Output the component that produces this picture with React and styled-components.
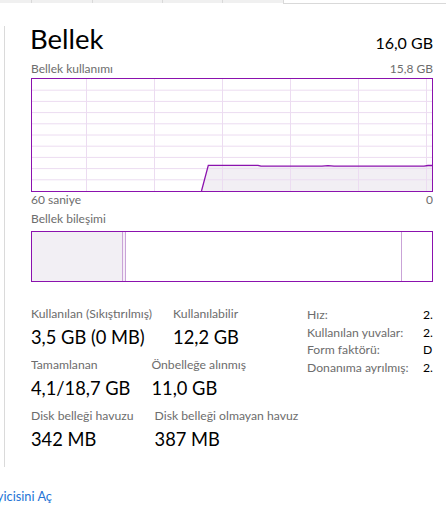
import styled, { createGlobalStyle } from "styled-components"

const GlobalStyle = createGlobalStyle`
html, body {
  margin: 0;
  padding: 0;
  background: #ffffff;
}
body {
  font-family: "Lato", "Noto Sans", sans-serif;
  color: #000000;
}
`

const Page = styled.div`
width: 446px;
height: 509px;
display: flex;
flex-direction: column;
overflow: hidden;
`

const TabStrip = styled.div`
display: flex;
height: 4px;
flex-shrink: 0;
`
const Tab = styled.div`
width: ${(p) => p.w}px;
height: 3px;
background: #f0f0f0;
border-left: ${(p) => (p.first ? "none" : "1px solid #d9d9d9")};
box-sizing: border-box;
`
const TabRest = styled.div`
flex: 1;
height: 3px;
border-left: 1px solid #d9d9d9;
border-bottom: 1px solid #d9d9d9;
`

const Main = styled.div`
display: flex;
height: 463px;
flex-shrink: 0;
`
const Divider = styled.div`
width: 1px;
margin: 22px 0 0 4px;
background: #dadada;
`
const Panel = styled.div`
width: 402px;
margin-left: 26px;
padding-top: 18px;
overflow: hidden;
`

const Header = styled.div`
display: flex;
justify-content: space-between;
align-items: baseline;
height: 34px;
`
const Title = styled.h1`
margin: 0 0 0 -1px;
font-size: 27.5px;
font-weight: 400;
line-height: 34px;
`
const Total = styled.span`
font-size: 16px;
line-height: 20px;
`

const Caption = styled.div`
display: flex;
justify-content: space-between;
font-size: 12px;
line-height: 16px;
color: #6d6d6d;
margin-top: ${(p) => p.mt || 0}px;
`

const Chart = styled.div`
margin-top: 1px;
height: 112px;
border: 1px solid #8b12ae;
`

const Composition = styled.div`
margin-top: 4px;
height: 49px;
display: flex;
border: 1px solid #8b12ae;
`
const Segment = styled.div`
width: ${(p) => (p.w ? `${p.w}px` : "auto")};
flex: ${(p) => (p.w ? "none" : "1")};
background: ${(p) => p.bg || "#ffffff"};
border-right: ${(p) => (p.last ? "none" : "1px solid #c9a3d7")};
`

const Stats = styled.div`
margin-top: 24px;
display: flex;
align-items: flex-start;
`
const StatsLeft = styled.div`
width: 276px;
display: flex;
flex-direction: column;
gap: 8px;
`
const StatRow = styled.div`
display: flex;
gap: 21px;
`
const Stat = styled.div`
display: flex;
flex-direction: column;
gap: 3px;
white-space: nowrap;
`
const StatLabel = styled.span`
font-size: 12.2px;
line-height: 16px;
color: #6d6d6d;
`
const StatValue = styled.span`
font-size: 18.3px;
line-height: 24px;
`

const Specs = styled.div`
display: grid;
grid-template-columns: 116px auto;
font-size: 12.2px;
line-height: 17.7px;
white-space: nowrap;
`
const SpecLabel = styled.span`
color: #6d6d6d;
`
const SpecValue = styled.span`
color: #000000;
`

const Footer = styled.div`
margin-top: 21px;
width: 52px;
display: flex;
justify-content: flex-end;
overflow: hidden;
white-space: nowrap;
`
const Link = styled.a`
font-size: 12.8px;
line-height: 16px;
color: #2474d6;
cursor: pointer;
`

const vLines = [54, 122, 190, 258, 326, 394]
const hLines = [1, 2, 3, 4, 5, 6, 7, 8, 9].map((i) => i * 11.2)
const usage = "169.5,112 176.3,86.3 226,86.3 229,87.2 290,87.2 296,86.6 302,87.2 392,87.2 396,86.5 400,86.5"

const UsageChart = () => (
  <svg width="400" height="112" style={{ display: "block" }}>
    <polygon points={`${usage} 400,112`} fill="#f2eff4" />
    {vLines.map((x) => (
      <line key={x} x1={x + 0.5} y1="0" x2={x + 0.5} y2="112" stroke="#ecdcf1" strokeWidth="1" />
    ))}
    {hLines.map((y) => (
      <line key={y} x1="0" y1={y} x2="400" y2={y} stroke="#ecdcf1" strokeWidth="1" />
    ))}
    <polyline points={usage} fill="none" stroke="#8b12ae" strokeWidth="1.3" />
  </svg>
)

const tabs = [31, 61, 70, 60, 61]

const specs = [
  ["Hız:", "2."],
  ["Kullanılan yuvalar:", "2."],
  ["Form faktörü:", "D"],
  ["Donanıma ayrılmış:", "2."],
]

const App = () => {
  return (
    <Page>
      <GlobalStyle />
      <TabStrip>
        {tabs.map((w, i) => (
          <Tab key={i} w={w} first={i === 0} />
        ))}
        <TabRest />
      </TabStrip>
      <Main>
        <Divider />
        <Panel>
          <Header>
            <Title>Bellek</Title>
            <Total>16,0 GB</Total>
          </Header>
          <Caption mt={5}>
            <span>Bellek kullanımı</span>
            <span>15,8 GB</span>
          </Caption>
          <Chart>
            <UsageChart />
          </Chart>
          <Caption>
            <span>60 saniye</span>
            <span>0</span>
          </Caption>
          <Caption mt={3}>
            <span>Bellek bileşimi</span>
          </Caption>
          <Composition>
            <Segment w={90} bg="#f2eff4" />
            <Segment w={2} bg="#f6eef8" />
            <Segment w={275} />
            <Segment last />
          </Composition>
          <Stats>
            <StatsLeft>
              <StatRow>
                <Stat>
                  <StatLabel>Kullanılan (Sıkıştırılmış)</StatLabel>
                  <StatValue>3,5 GB (0 MB)</StatValue>
                </Stat>
                <Stat>
                  <StatLabel>Kullanılabilir</StatLabel>
                  <StatValue>12,2 GB</StatValue>
                </Stat>
              </StatRow>
              <StatRow>
                <Stat>
                  <StatLabel>Tamamlanan</StatLabel>
                  <StatValue>4,1/18,7 GB</StatValue>
                </Stat>
                <Stat>
                  <StatLabel>Önbelleğe alınmış</StatLabel>
                  <StatValue>11,0 GB</StatValue>
                </Stat>
              </StatRow>
              <StatRow>
                <Stat>
                  <StatLabel>Disk belleği havuzu</StatLabel>
                  <StatValue>342 MB</StatValue>
                </Stat>
                <Stat>
                  <StatLabel>Disk belleği olmayan havuz</StatLabel>
                  <StatValue>387 MB</StatValue>
                </Stat>
              </StatRow>
            </StatsLeft>
            <Specs>
              {specs.map(([label, value]) => [
                <SpecLabel key={label}>{label}</SpecLabel>,
                <SpecValue key={label + "v"}>{value}</SpecValue>,
              ])}
            </Specs>
          </Stats>
        </Panel>
      </Main>
      <Footer>
        <Link>Kaynak İzleyicisini Aç</Link>
      </Footer>
    </Page>
  )
}

export default App
